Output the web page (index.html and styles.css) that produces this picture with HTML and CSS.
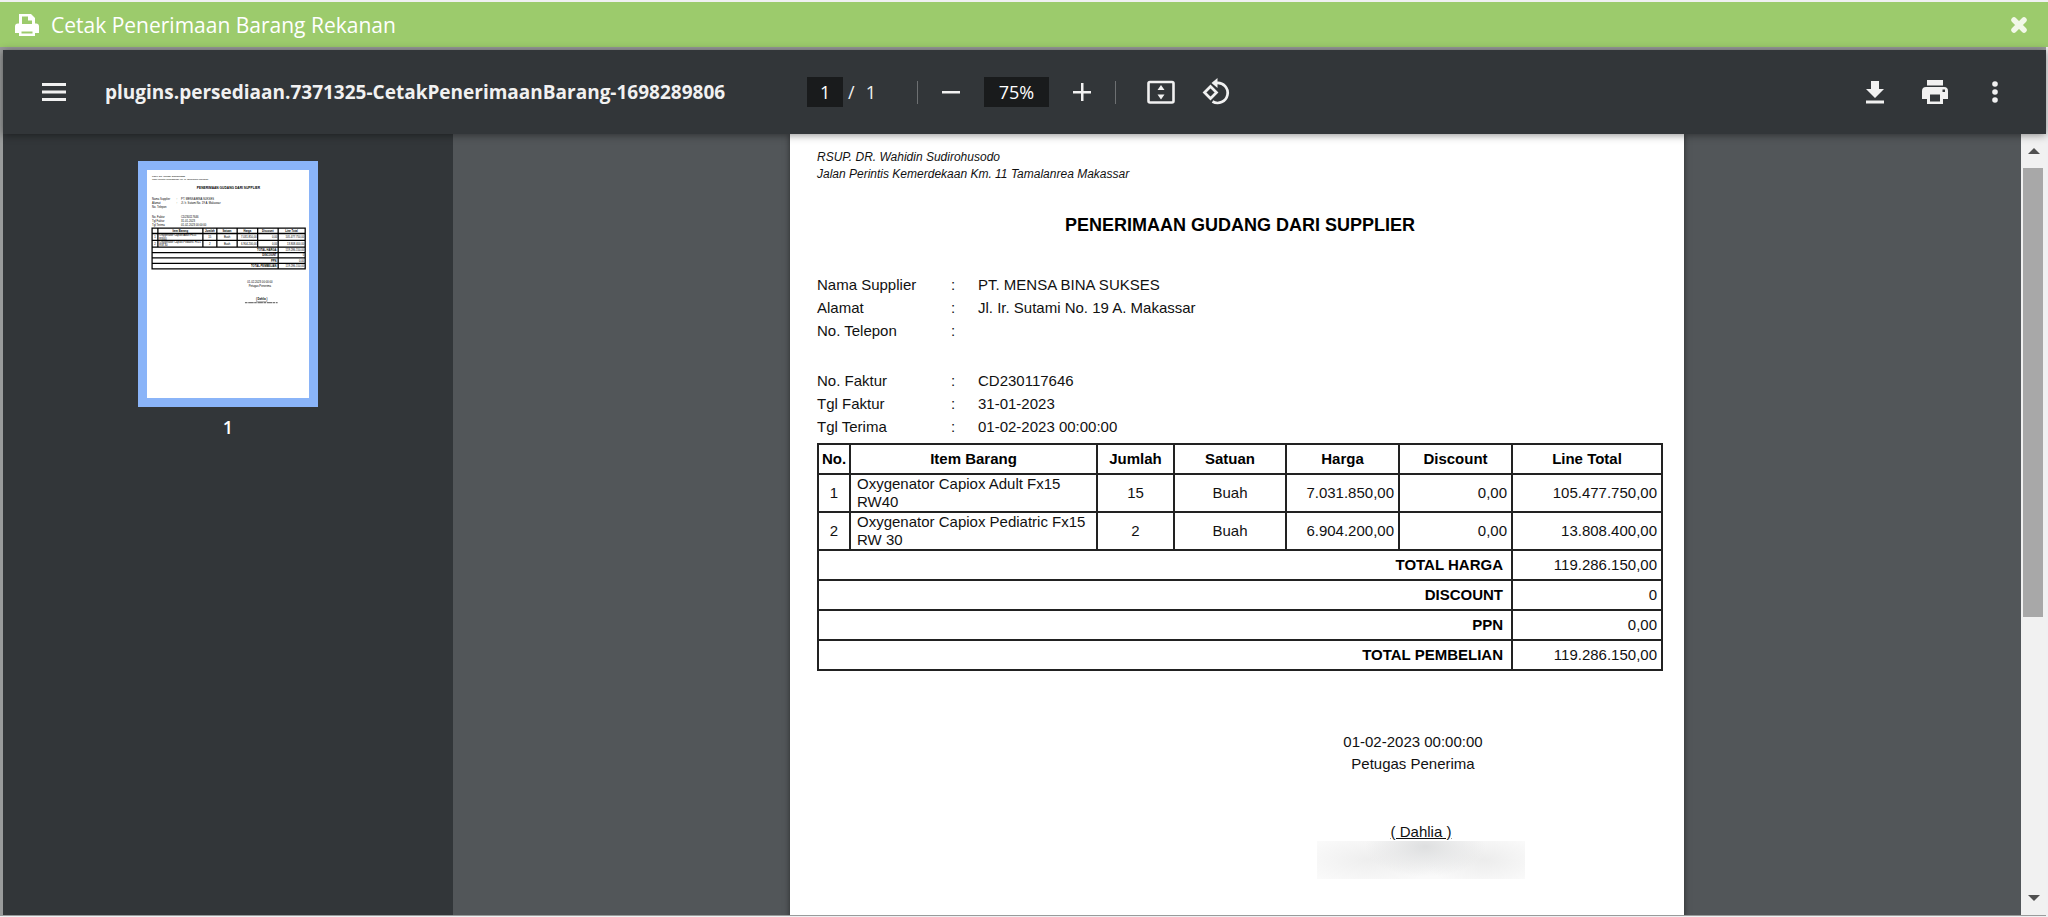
FILE: index.html
```html
<!DOCTYPE html>
<html lang="id">
<head>
  <meta charset="UTF-8">
  <title>Cetak Penerimaan Barang Rekanan</title>
  <link rel="stylesheet" href="styles.css">
</head>
<body>

  <header class="modal-header">
    <svg class="header-icon" width="24" height="22" viewBox="0 0 24 22">
      <path fill="#fff" fill-rule="evenodd" d="M4 0h12l4 4v5.500h1a3 3 0 0 1 3 3V19h-4v3H4v-3H0v-6.500a3 3 0 0 1 3-3h1zM7 2.500V10h10V6.500h-4v-4zM6.500 17.500v2h11v-2z"/>
    </svg>
    <h1 class="modal-title">Cetak Penerimaan Barang Rekanan</h1>
    <button class="close-btn" aria-label="Tutup">
      <svg width="18" height="18" viewBox="0 0 18 18">
        <path d="M4 4l10 10M14 4L4 14" stroke="#f1f8e8" stroke-width="5.5" stroke-linecap="round"/>
      </svg>
    </button>
  </header>

  <main class="viewer">
    <div class="toolbar">
      <div class="toolbar-start">
        <button class="tool-btn" aria-label="Menu">
          <svg width="24" height="18" viewBox="0 0 24 18"><path fill="#f1f1f1" d="M0 0h24v3H0zM0 7.5h24v3H0zM0 15h24v3H0z"/></svg>
        </button>
        <span class="file-name">plugins.persediaan.7371325-CetakPenerimaanBarang-1698289806</span>
      </div>

      <div class="toolbar-center">
        <div class="page-select">
          <input class="page-input" type="text" value="1" aria-label="Halaman">
          <span>/</span>
          <span class="page-count">1</span>
        </div>
        <span class="separator"></span>
        <button class="tool-btn" aria-label="Perkecil">
          <svg width="18" height="18" viewBox="0 0 18 18"><path fill="#f1f1f1" d="M0 8h18v2.500H0z"/></svg>
        </button>
        <input class="zoom-input" type="text" value="75%" aria-label="Zoom">
        <button class="tool-btn" aria-label="Perbesar">
          <svg width="18" height="18" viewBox="0 0 18 18"><path fill="#f1f1f1" d="M0 8h8V0h2.500v8H18v2.500h-7.500V18H8v-7.500H0z"/></svg>
        </button>
        <span class="separator separator-end"></span>
        <button class="tool-btn" aria-label="Sesuaikan halaman">
          <svg width="28" height="24" viewBox="0 0 28 24">
            <rect x="1.500" y="2" width="25" height="20.500" rx="1.500" fill="none" stroke="#f1f1f1" stroke-width="2.600"/>
            <path fill="#f1f1f1" d="M14 5l3.500 5h-7zM14 19.500l3.500-5h-7z"/>
          </svg>
        </button>
        <button class="tool-btn" aria-label="Putar">
          <svg width="28" height="28" viewBox="0 0 28 28" fill="none" stroke="#f1f1f1" stroke-width="2.700">
            <path d="M2.500 14.500l6-6 6 6-6 6z"/>
            <path d="M14.500 5a10 10 0 1 1-4 18.500"/>
            <path d="M9.500 5L15.500 0v10z" fill="#f1f1f1" stroke="none"/>
          </svg>
        </button>
      </div>

      <div class="toolbar-end">
        <button class="tool-btn" aria-label="Unduh">
          <svg width="18" height="23" viewBox="0 0 18 23"><path fill="#f1f1f1" d="M5 0h8v8h5l-9 9-9-9h5zM0 19.500h18v3H0z"/></svg>
        </button>
        <button class="tool-btn" aria-label="Cetak">
          <svg width="26" height="24" viewBox="0 0 26 24">
            <path fill="#f1f1f1" fill-rule="evenodd" d="M5 0h16v5.500H5zM4 7h18a4 4 0 0 1 4 4v8h-5v5H5v-5H0v-8a4 4 0 0 1 4-4zM8 14.500v7h10v-7zM20.500 9.500v2.500h2.500V9.500z"/>
          </svg>
        </button>
        <button class="tool-btn" aria-label="Opsi lainnya">
          <svg width="6" height="22" viewBox="0 0 6 22" fill="#f1f1f1"><circle cx="3" cy="3" r="2.800"/><circle cx="3" cy="11" r="2.800"/><circle cx="3" cy="19" r="2.800"/></svg>
        </button>
      </div>
    </div>

    <div class="workspace">
      <aside class="sidebar">
        <button class="thumbnail" aria-label="Halaman 1">
          <svg class="thumb-page" viewBox="0 0 893 1257" aria-hidden="true" font-family="Liberation Sans, Arial, sans-serif" font-size="15">
            <g font-style="italic" font-size="12">
              <text x="28" y="40">RSUP. DR. Wahidin Sudirohusodo</text>
              <text x="28" y="57">Jalan Perintis Kemerdekaan Km. 11 Tamalanrea Makassar</text>
            </g>
            <text x="449" y="107" text-anchor="middle" font-weight="bold" font-size="18">PENERIMAAN GUDANG DARI SUPPLIER</text>
            <text x="28" y="166">Nama Supplier</text><text x="162" y="166">:</text><text x="188" y="166">PT. MENSA BINA SUKSES</text>
            <text x="28" y="189">Alamat</text><text x="162" y="189">:</text><text x="188" y="189">Jl. Ir. Sutami No. 19 A. Makassar</text>
            <text x="28" y="212">No. Telepon</text>
            <text x="28" y="265">No. Faktur</text><text x="188" y="265">CD230117646</text>
            <text x="28" y="285">Tgl Faktur</text><text x="188" y="285">31-01-2023</text>
            <text x="28" y="307">Tgl Terima</text><text x="188" y="307">01-02-2023 00:00:00</text>
            <path fill="none" stroke="#000" stroke-width="7" d="M28 320H872V545H28zM28 350H872M28 388H872M28 425H872M28 455H872M28 485H872M28 515H872M60 320V425M308 320V425M385 320V425M497 320V425M610 320V425M723 320V545"/>
            <g font-weight="bold">
              <text x="140" y="342">Item Barang</text><text x="320" y="342">Jumlah</text><text x="416" y="342">Satuan</text>
              <text x="532" y="342">Harga</text><text x="634" y="342">Discount</text><text x="762" y="342">Line Total</text>
              <text x="714" y="446" text-anchor="end">TOTAL HARGA</text><text x="714" y="476" text-anchor="end">DISCOUNT</text>
              <text x="714" y="506" text-anchor="end">PPN</text><text x="714" y="536" text-anchor="end">TOTAL PEMBELIAN</text>
            </g>
            <text x="40" y="376">1</text><text x="68" y="366">Oxygenator Capiox Adult Fx15</text><text x="68" y="384">RW40</text>
            <text x="40" y="413">2</text><text x="68" y="404">Oxygenator Capiox Pediatric Fx15</text><text x="68" y="421">RW 30</text>
            <text x="338" y="376">15</text><text x="424" y="376">Buah</text><text x="342" y="413">2</text><text x="424" y="413">Buah</text>
            <g text-anchor="end">
              <text x="605" y="376">7.031.850,00</text><text x="718" y="376">0,00</text><text x="867" y="376">105.477.750,00</text>
              <text x="605" y="413">6.904.200,00</text><text x="718" y="413">0,00</text><text x="867" y="413">13.808.400,00</text>
              <text x="867" y="446">119.286.150,00</text><text x="867" y="476">0</text><text x="867" y="506">0,00</text><text x="867" y="536">119.286.150,00</text>
            </g>
            <text x="622" y="622" text-anchor="middle">01-02-2023 00:00:00</text>
            <text x="622" y="646" text-anchor="middle">Petugas Penerima</text>
            <text x="632" y="717" text-anchor="middle" font-weight="bold" text-decoration="underline">( Dahlia )</text>
            <path d="M540 731H720" stroke="#777" stroke-width="8" stroke-dasharray="14 4 30 3"/>
          </svg>
        </button>
        <span class="thumb-label">1</span>
      </aside>

      <section class="document-area">
        <article class="page">
          <address class="hospital">
            RSUP. DR. Wahidin Sudirohusodo<br>
            Jalan Perintis Kemerdekaan Km. 11 Tamalanrea Makassar
          </address>

          <h2 class="doc-title">PENERIMAAN GUDANG DARI SUPPLIER</h2>

          <div class="info">
            <span>Nama Supplier</span><span>:</span><span>PT. MENSA BINA SUKSES</span>
            <span>Alamat</span><span>:</span><span>Jl. Ir. Sutami No. 19 A. Makassar</span>
            <span>No. Telepon</span><span>:</span><span></span>
          </div>
          <div class="info info-faktur">
            <span>No. Faktur</span><span>:</span><span>CD230117646</span>
            <span>Tgl Faktur</span><span>:</span><span>31-01-2023</span>
            <span>Tgl Terima</span><span>:</span><span>01-02-2023 00:00:00</span>
          </div>

          <table class="items">
            <colgroup>
              <col class="col-no"><col class="col-item"><col class="col-qty"><col class="col-unit">
              <col class="col-price"><col class="col-disc"><col class="col-total">
            </colgroup>
            <thead>
              <tr>
                <th>No.</th>
                <th>Item Barang</th>
                <th>Jumlah</th>
                <th>Satuan</th>
                <th>Harga</th>
                <th>Discount</th>
                <th>Line Total</th>
              </tr>
            </thead>
            <tbody>
              <tr>
                <td>1</td>
                <td class="item-name">Oxygenator Capiox Adult Fx15 RW40</td>
                <td>15</td>
                <td>Buah</td>
                <td class="number">7.031.850,00</td>
                <td class="number">0,00</td>
                <td class="number">105.477.750,00</td>
              </tr>
              <tr>
                <td>2</td>
                <td class="item-name">Oxygenator Capiox Pediatric Fx15 RW 30</td>
                <td>2</td>
                <td>Buah</td>
                <td class="number">6.904.200,00</td>
                <td class="number">0,00</td>
                <td class="number">13.808.400,00</td>
              </tr>
            </tbody>
            <tfoot>
              <tr><th class="total-label" colspan="6">TOTAL HARGA</th><td class="number">119.286.150,00</td></tr>
              <tr><th class="total-label" colspan="6">DISCOUNT</th><td class="number">0</td></tr>
              <tr><th class="total-label" colspan="6">PPN</th><td class="number">0,00</td></tr>
              <tr><th class="total-label" colspan="6">TOTAL PEMBELIAN</th><td class="number">119.286.150,00</td></tr>
            </tfoot>
          </table>

          <div class="signature">
            <div>01-02-2023 00:00:00</div>
            <div>Petugas Penerima</div>
            <div class="signer">( Dahlia )</div>
            <div class="redacted"></div>
          </div>
        </article>
      </section>

      <div class="scrollbar">
        <button class="scroll-btn" aria-label="Gulir ke atas"><svg width="12" height="6" viewBox="0 0 12 6"><path fill="#505050" d="M6 0l6 6H0z"/></svg></button>
        <div class="scroll-track"><div class="scroll-thumb"></div></div>
        <button class="scroll-btn" aria-label="Gulir ke bawah"><svg width="12" height="6" viewBox="0 0 12 6"><path fill="#505050" d="M0 0h12L6 6z"/></svg></button>
      </div>
    </div>
  </main>

</body>
</html>
```
FILE: styles.css
```css
* {
  box-sizing: border-box;
}
body {
  margin: 0;
  height: 100vh;
  padding: 2px 0 1px;
  display: flex;
  flex-direction: column;
  overflow: hidden;
  background: #f0f0f2;
  font-family: "Open Sans", "Segoe UI", sans-serif;
}
button {
  border: none;
  padding: 0;
  background: none;
  cursor: pointer;
}
svg {
  display: block;
}

/* green title bar */
.modal-header {
  flex: none;
  height: 45px;
  display: flex;
  align-items: center;
  gap: 12px;
  padding: 0 20px 0 15px;
  background: #9ccb6c;
}
.modal-title {
  margin: 0;
  flex: 1;
  font-size: 21px;
  font-weight: 400;
  line-height: 28px;
  color: #fff;
}

/* pdf viewer */
.viewer {
  flex: 1;
  min-height: 0;
  display: flex;
  flex-direction: column;
  border: solid #999b9b;
  border-width: 3px 0 1px 3px;
  margin-right: 2px;
}
.toolbar {
  position: relative;
  z-index: 1;
  flex: none;
  height: 84px;
  display: grid;
  grid-template-columns: 1fr auto 1fr;
  align-items: center;
  padding: 0 29px;
  background: #323639;
  box-shadow: 0 1px 8px rgba(0, 0, 0, 0.45);
  color: #f1f1f1;
  font-size: 18px;
}
.toolbar-start,
.toolbar-center,
.toolbar-end {
  display: flex;
  align-items: center;
}
.toolbar-start {
  gap: 29px;
}
.toolbar-center {
  gap: 11px;
  margin-right: 4px;
}
.toolbar-end {
  gap: 16px;
  justify-content: flex-end;
}
.tool-btn {
  width: 44px;
  height: 44px;
  display: flex;
  align-items: center;
  justify-content: center;
}
.file-name {
  font-size: 19px;
  font-weight: 700;
  white-space: nowrap;
}
.page-select {
  display: flex;
  align-items: center;
  gap: 5px;
  margin-right: 30px;
}
.page-count {
  margin-left: 6px;
}
.page-input,
.zoom-input {
  width: 36px;
  height: 30px;
  border: none;
  padding: 0;
  background: #191b1c;
  color: #fff;
  font: inherit;
  text-align: center;
}
.zoom-input {
  width: 65px;
}
.separator {
  width: 1px;
  height: 23px;
  background: #6d7072;
}
.separator-end {
  margin-right: 12px;
}

.workspace {
  flex: 1;
  min-height: 0;
  display: flex;
}
.sidebar {
  flex: none;
  width: 450px;
  display: flex;
  flex-direction: column;
  align-items: center;
  padding-top: 27px;
  background: #323639;
}
.thumbnail {
  width: 180px;
  padding: 9px;
  background: #8ab4f8;
}
.thumb-page {
  width: 100%;
  background: #fff;
}
.thumb-label {
  margin-top: 8px;
  font-size: 18px;
  font-weight: 600;
  line-height: 24px;
  color: #fff;
}
.document-area {
  flex: 1;
  min-width: 0;
  display: flex;
  justify-content: center;
  align-items: flex-start;
  overflow: hidden;
  background: #525659;
}

/* printed page */
.page {
  width: 894px;
  min-height: 1255px;
  padding: 15px 21px 0 27px;
  background: #fff;
  box-shadow: 0 0 6px rgba(0, 0, 0, 0.5);
  font-family: "Liberation Sans", Arial, sans-serif;
  font-size: 15px;
  color: #111;
}
.hospital {
  font-size: 12px;
  line-height: 17px;
}
.doc-title {
  margin: 31px 0 37px;
  font-size: 18px;
  line-height: 22px;
  text-align: center;
  color: #000;
}
.info {
  display: grid;
  grid-template-columns: 134px 27px 1fr;
  grid-auto-rows: 23px;
  line-height: 23px;
}
.info-faktur {
  margin-top: 27px;
}
.items {
  width: 100%;
  margin-top: 5px;
  table-layout: fixed;
  border-collapse: collapse;
  border: 2px solid #777;
  line-height: 18px;
  text-align: center;
}
.col-no { width: 32px; }
.col-qty { width: 77px; }
.col-unit { width: 112px; }
.col-price { width: 113px; }
.col-disc { width: 113px; }
.col-total { width: 150px; }
.items th,
.items td {
  height: 30px;
  padding: 0 4px;
  border: 2px solid #222;
}
.items th {
  color: #000;
}
.items tbody td {
  height: 37px;
}
.items thead th:first-child {
  padding: 0;
}
.items .item-name {
  padding: 0 8px 0 6px;
  text-align: left;
}
.items .number {
  text-align: right;
}
.items .total-label {
  padding-right: 8px;
  text-align: right;
}
.signature {
  width: 208px;
  margin: 60px 138px 0 auto;
  line-height: 22px;
  text-align: center;
}
.signature > div {
  padding-right: 16px;
}
.signature .signer {
  margin-top: 48px;
  padding: 0;
  line-height: 18px;
  text-decoration: underline;
}
.signature .redacted {
  height: 38px;
  padding: 0;
  background:
    radial-gradient(ellipse 60px 30px at 52% 15%, #dedfe0, transparent),
    radial-gradient(ellipse 70px 26px at 25% 50%, #eeeeee, transparent),
    radial-gradient(ellipse 60px 26px at 80% 50%, #ececec, transparent),
    #fafafa;
}

.scrollbar {
  flex: none;
  width: 25px;
  display: flex;
  flex-direction: column;
  background: #f1f1f1;
}
.scroll-btn {
  height: 34px;
  display: flex;
  align-items: center;
  justify-content: center;
}
.scroll-track {
  flex: 1;
  padding: 0 3px 0 2px;
}
.scroll-thumb {
  height: 63%;
  background: #a8a8a8;
}
```
